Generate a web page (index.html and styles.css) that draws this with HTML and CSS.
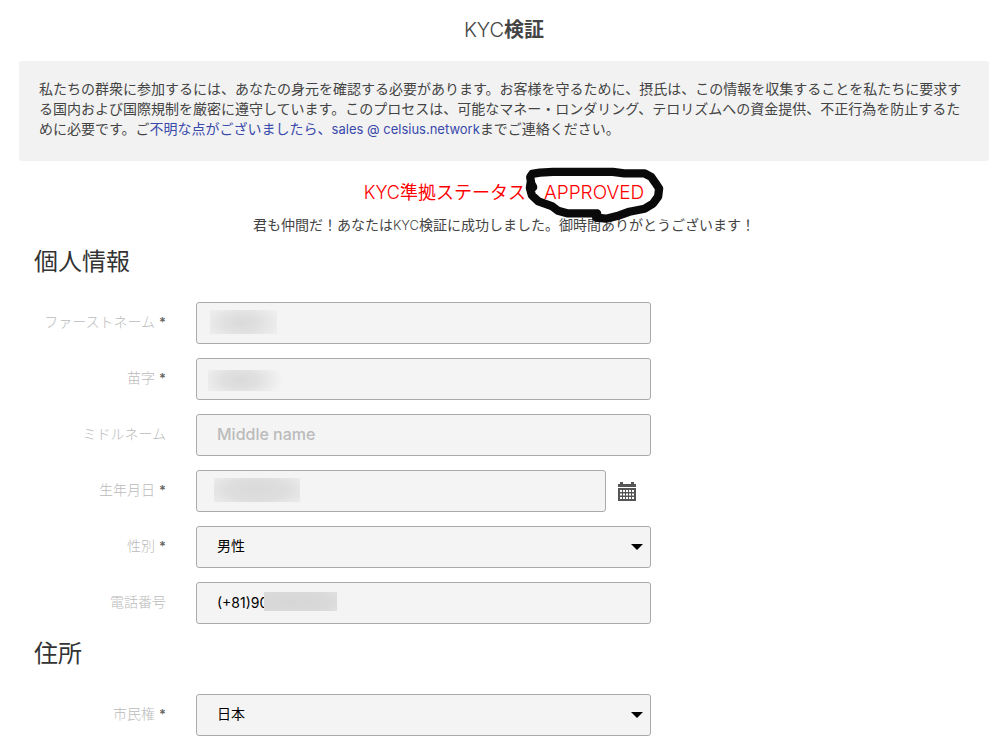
FILE: index.html
```html
<!DOCTYPE html>
<html lang="ja">
<head>
<meta charset="utf-8">
<meta name="viewport" content="width=device-width, initial-scale=1">
<title>KYC検証</title>
<link rel="stylesheet" href="styles.css">
</head>
<body>
<main class="page">
  <h1 class="title"><span class="latin">KYC</span>検証</h1>
  <p class="notice">私たちの群衆に参加するには、あなたの身元を確認する必要があります。お客様を守るために、摂氏は、この情報を収集することを私たちに要求する国内および国際規制を厳密に遵守しています。このプロセスは、可能なマネー・ロンダリング、テロリズムへの資金提供、不正行為を防止するために必要です。ご<a href="#contact">不明な点がございましたら、<span class="mail">sales @ celsius.network</span></a>までご連絡ください。</p>
  <p class="status"><span class="latin">KYC</span>準拠ステータス：<span class="result">APPROVED<svg class="scribble" viewBox="40 30 430 175" aria-hidden="true"><path d="M70 94 L64 82 L61 63 L67 54 L90 50 L130 48 H310 L345 52 H405 L426 63 L438 80 L450 98 L447 122 L432 143 L406 159 L360 168 L323 181 L290 189 L260 186 L263 173 H175 L145 165 L128 152 L86 137 L66 118 L60 96 L63 76"/></svg></span></p>
  <p class="message">君も仲間だ！あなたは<span class="latin">KYC</span>検証に成功しました。御時間ありがとうございます！</p>

  <form class="form">
    <h2 class="heading">個人情報</h2>
    <div class="row">
      <label class="label" for="first">ファーストネーム <b>*</b></label>
      <div class="field"><input class="control" id="first" type="text"><span class="mask mask-first"></span></div>
    </div>
    <div class="row">
      <label class="label" for="last">苗字 <b>*</b></label>
      <div class="field"><input class="control" id="last" type="text"><span class="mask mask-last"></span></div>
    </div>
    <div class="row">
      <label class="label" for="middle">ミドルネーム</label>
      <div class="field"><input class="control" id="middle" type="text" placeholder="Middle name"></div>
    </div>
    <div class="row">
      <label class="label" for="birth">生年月日 <b>*</b></label>
      <div class="field with-button">
        <input class="control" id="birth" type="text"><span class="mask mask-birth"></span>
        <button class="calendar" type="button" aria-label="カレンダー">
          <svg viewBox="0 0 20 20" aria-hidden="true">
            <path fill="#555" d="M1 3h2V1h3v2h8V1h3v2h2v3H1zM1 7h18v13H1z"/>
            <path fill="#fff" d="M3 9h2v2H3zm3 0h2v2H6zm3 0h2v2H9zm3 0h2v2h-2zm3 0h2v2h-2zM3 12.500h2v2H3zm3 0h2v2H6zm3 0h2v2H9zm3 0h2v2h-2zm3 0h2v2h-2zM3 16h2v2H3zm3 0h2v2H6zm3 0h2v2H9zm3 0h2v2h-2zm3 0h2v2h-2z"/>
          </svg>
        </button>
      </div>
    </div>
    <div class="row">
      <label class="label" for="gender">性別 <b>*</b></label>
      <div class="field"><select class="control" id="gender"><option>男性</option></select><span class="arrow"></span></div>
    </div>
    <div class="row">
      <label class="label" for="phone">電話番号</label>
      <div class="field"><input class="control" id="phone" type="tel" value="(+81)90"><span class="mask mask-phone"></span></div>
    </div>
    <h2 class="heading">住所</h2>
    <div class="row">
      <label class="label" for="country">市民権 <b>*</b></label>
      <div class="field"><select class="control" id="country"><option>日本</option></select><span class="arrow"></span></div>
    </div>
  </form>
</main>
</body>
</html>
```
FILE: styles.css
```css
* {
  box-sizing: border-box;
}

body {
  margin: 0;
  background: #fff;
  color: #444;
  font: 14px/20px Inter, "Noto Sans CJK JP", sans-serif;
}

.page {
  padding: 16px 19px 12px;
}

.title {
  margin: 0 0 17px;
  font-size: 20px;
  line-height: 28px;
  text-align: center;
}

.latin {
  font-weight: 300;
}

.notice {
  margin: 0;
  padding: 18px 20px 22px;
  border-radius: 3px;
  background: #f2f2f2;
}

.notice a {
  color: #3949ab;
  text-decoration: none;
}

.mail {
  font-size: 13px;
}

.status {
  margin: 18px 0 0;
  color: #f00;
  font-size: 18px;
  line-height: 28px;
  text-align: center;
}

.result {
  position: relative;
  font-size: 19px;
  font-weight: 300;
}

.scribble {
  position: absolute;
  top: -15px;
  left: -21px;
  width: 143px;
  height: 58px;
  fill: none;
  stroke: #0a0a0a;
  stroke-width: 25;
  stroke-linecap: round;
  stroke-linejoin: round;
}

.message {
  margin: 8px 0 11px;
  text-align: center;
}

.message .latin {
  font-size: 13px;
}

.form {
  padding: 0 15px;
}

.heading {
  margin: 0 0 24px;
  color: #333;
  font-size: 24px;
  font-weight: 400;
  line-height: 32px;
}

.row {
  display: grid;
  grid-template-columns: 132px minmax(0, 455px);
  column-gap: 30px;
  margin-bottom: 14px;
}

.label {
  padding-top: 10px;
  color: #bbb;
  font-weight: 300;
  text-align: right;
}

.label b {
  color: #666;
  font-size: 13px;
  font-weight: 600;
}

.field {
  position: relative;
}

.control {
  display: block;
  width: 100%;
  height: 42px;
  padding: 0 20px 2px;
  border: 1px solid #aaa;
  border-radius: 3px;
  background: #f4f4f4;
  color: #000;
  font: inherit;
  appearance: none;
}

.control::placeholder {
  color: #bbb;
  font-size: 16px;
  font-weight: 500;
}

.with-button {
  display: grid;
  grid-template-columns: minmax(0, 1fr) 20px;
  column-gap: 11px;
  align-items: center;
  padding-right: 14px;
}

.calendar {
  width: 20px;
  height: 20px;
  padding: 0;
  border: 0;
  background: none;
}

.calendar svg {
  display: block;
}

.arrow {
  position: absolute;
  top: 18px;
  right: 8px;
  border: 6px solid transparent;
  border-top-color: #000;
  border-bottom: 0;
  pointer-events: none;
}

.mask {
  position: absolute;
  pointer-events: none;
}

.mask-first {
  top: 8px;
  left: 14px;
  width: 67px;
  height: 24px;
  background: radial-gradient(ellipse 42px 22px at 32px 13px, #dadada, #e0e0e0 40%, #f0f0f0);
}

.mask-last {
  top: 12px;
  left: 12px;
  width: 77px;
  height: 21px;
  background: radial-gradient(ellipse 44px 22px at 32px 10px, #dadada, #e0e0e0 40%, #f4f4f4);
}

.mask-birth {
  top: 8px;
  left: 18px;
  width: 86px;
  height: 24px;
  background: radial-gradient(ellipse 60px 22px at center, #dadada, #dedede 50%, #efefef);
}

.mask-phone {
  top: 10px;
  left: 68px;
  width: 73px;
  height: 19px;
  background: radial-gradient(ellipse 80px 24px at 28px 10px, #d6d6d6, #dadada 50%, #ececec);
}
```
